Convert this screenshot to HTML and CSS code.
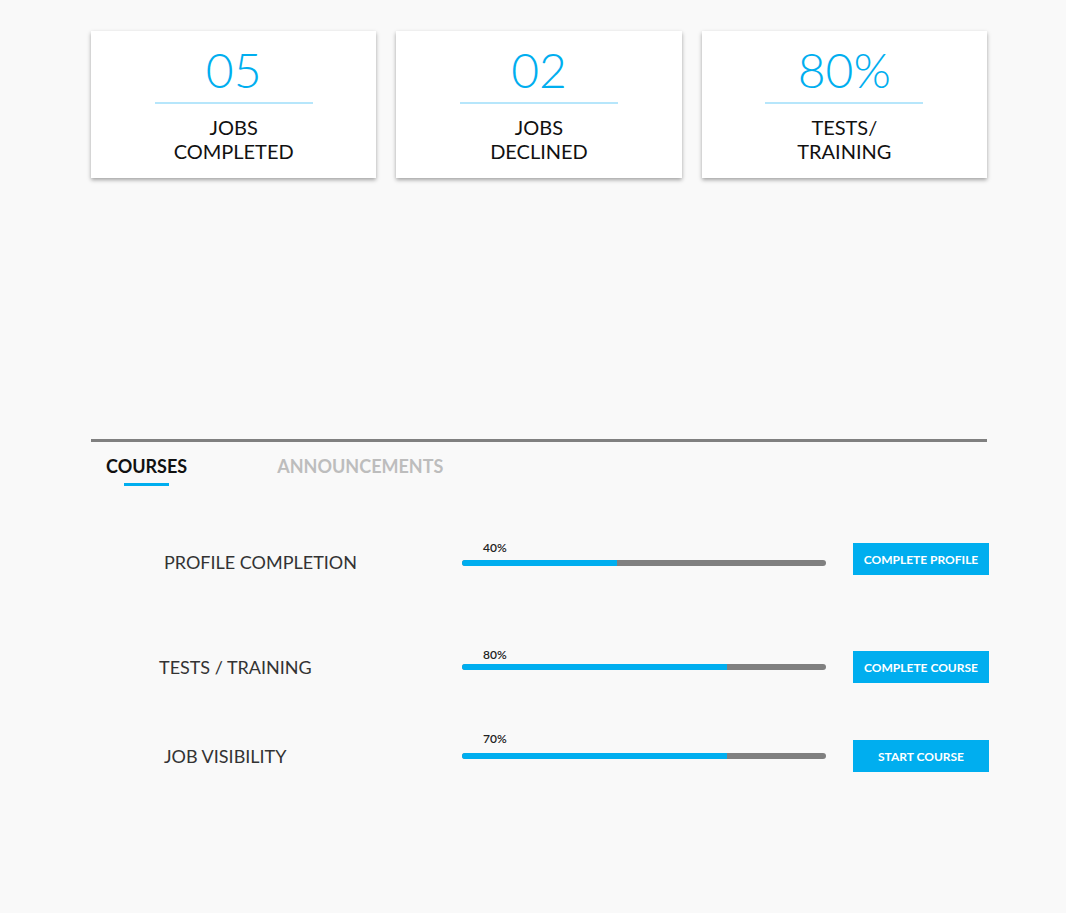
FILE: index.html
```html
<!DOCTYPE html>
<html lang="en">
<head>
<meta charset="utf-8">
<title>Dashboard</title>
<link rel="stylesheet" href="styles.css">
</head>
<body>
<main class="page">
  <section class="stats">
    <div class="card">
      <div class="card-value">05</div>
      <div class="card-rule"></div>
      <div class="card-label">JOBS<br>COMPLETED</div>
    </div>
    <div class="card">
      <div class="card-value">02</div>
      <div class="card-rule"></div>
      <div class="card-label">JOBS<br>DECLINED</div>
    </div>
    <div class="card">
      <div class="card-value">80%</div>
      <div class="card-rule"></div>
      <div class="card-label">TESTS/<br>TRAINING</div>
    </div>
  </section>

  <section class="tabs">
    <nav class="tab-list">
      <span class="tab tab--active">COURSES</span>
      <span class="tab">ANNOUNCEMENTS</span>
    </nav>

    <div class="course-list">
      <div class="course-row course-row--one">
        <div class="course-name">PROFILE COMPLETION</div>
        <div class="course-progress">
          <div class="course-pct">40%</div>
          <div class="bar"><div class="bar-fill" style="width: 42.6%"></div></div>
        </div>
        <button class="course-btn">COMPLETE PROFILE</button>
      </div>
      <div class="course-row course-row--two">
        <div class="course-name">TESTS / TRAINING</div>
        <div class="course-progress">
          <div class="course-pct">80%</div>
          <div class="bar"><div class="bar-fill" style="width: 72.8%"></div></div>
        </div>
        <button class="course-btn">COMPLETE COURSE</button>
      </div>
      <div class="course-row course-row--three">
        <div class="course-name">JOB VISIBILITY</div>
        <div class="course-progress">
          <div class="course-pct">70%</div>
          <div class="bar"><div class="bar-fill" style="width: 72.8%"></div></div>
        </div>
        <button class="course-btn">START COURSE</button>
      </div>
    </div>
  </section>
</main>
</body>
</html>
```

FILE: styles.css
```css
* { box-sizing: border-box; }

html, body {
  margin: 0;
  background: #f9f9f9;
  font-family: "Lato", "Open Sans", "Liberation Sans", sans-serif;
}

.page {
  width: 896px;
  margin-left: 91px;
  padding-top: 31px;
  min-height: 913px;
}

/* ---------- stat cards ---------- */
.stats {
  display: grid;
  grid-template-columns: repeat(3, 1fr);
  gap: 20px;
}

.card {
  background: #fff;
  box-shadow: 0 2px 4px rgba(0, 0, 0, 0.35);
  padding: 10px 0 15px;
  text-align: center;
}

.card-value {
  font-size: 48px;
  font-weight: 300;
  line-height: normal;
  color: #00aeef;
}

.card-rule {
  width: 158px;
  height: 2px;
  margin: 4px auto 11px;
  background: #b6e6fb;
}

.card-label {
  font-size: 20px;
  line-height: 24px;
  color: #111;
}

/* ---------- tabs ---------- */
.tabs {
  margin-top: 261px;
  border-top: 3px solid #808080;
}

.tab-list {
  display: flex;
  gap: 90px;
  padding: 13px 0 0 15px;
}

.tab {
  font-size: 18px;
  font-weight: 700;
  line-height: normal;
  color: #bdbdbd;
}

.tab--active {
  color: #111;
}

.tab--active::after {
  content: "";
  display: block;
  width: 45px;
  height: 3px;
  margin: 6px auto 0;
  background: #00aeef;
}

/* ---------- course rows ---------- */
.course-list {
  display: flex;
  flex-direction: column;
  padding-top: 57px;
}

.course-row {
  display: flex;
  align-items: flex-start;
  height: 32px;
}

.course-name {
  flex: 0 0 371px;
  padding-left: 73px;
  margin-top: 5px;
  font-size: 18px;
  line-height: 22px;
  color: #333;
}

.course-progress {
  flex: 0 0 364px;
}

.course-pct {
  margin: -2px 0 0 21px;
  font-size: 12px;
  font-weight: 600;
  line-height: 12px;
  color: #222;
}

.bar {
  height: 6px;
  margin-top: 3px;
  border-radius: 3px;
  background: #808080;
}

.bar-fill {
  height: 100%;
  border-radius: 3px 0 0 3px;
  background: #00aeef;
}

.course-btn {
  flex: 0 0 136px;
  height: 32px;
  margin-left: 27px;
  border: 0;
  padding: 0;
  background: #00aeef;
  color: #fff;
  font-family: inherit;
  font-size: 12px;
  font-weight: 700;
  display: flex;
  align-items: center;
  justify-content: center;
}

.course-row--one .course-name { margin-top: 8px; }
.course-row--one .course-progress { padding-top: 1px; }
.course-row--one .bar { margin-top: 6px; }

.course-row--two { margin-top: 76px; }
.course-row--two .course-name { padding-left: 68px; }

.course-row--three { margin-top: 57px; }
.course-row--three .course-pct { margin-top: -7px; }
.course-row--three .bar { margin-top: 8px; }
```
